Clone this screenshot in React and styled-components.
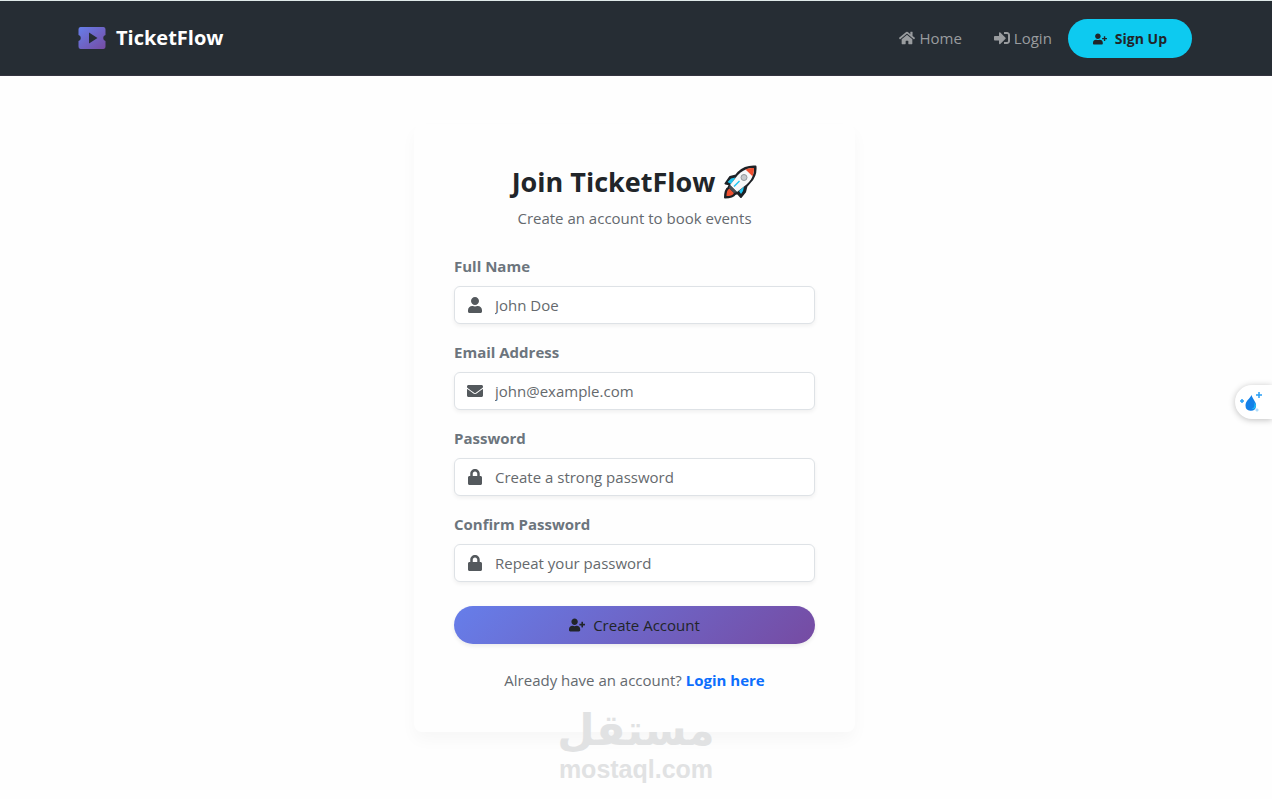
import React from "react";
import styled, { createGlobalStyle } from "styled-components";
import {
  FaHome,
  FaSignInAlt,
  FaUserPlus,
  FaUser,
  FaEnvelope,
  FaLock,
} from "react-icons/fa";

const GlobalStyle = createGlobalStyle`
  *, *::before, *::after { box-sizing: border-box; }
  body {
    margin: 0;
    background: #fefefe;
    color: #212529;
    font-family: "Open Sans", "Noto Sans", sans-serif;
    font-size: 15px;
    line-height: 24px;
  }
  button, input { font: inherit; }
  svg { flex: none; }
`;

const Navbar = styled.header`
  border-top: 1px solid #dfe9e8;
  border-bottom: 1px solid #343440;
  background: #262d34;
  padding-right: 2px;
`;

const NavInner = styled.div`
  display: flex;
  align-items: center;
  justify-content: space-between;
  max-width: 1138px;
  margin: 0 auto;
  padding: 18px 12px 17px;
`;

const Brand = styled.a`
  display: flex;
  align-items: center;
  gap: 10px;
  padding-bottom: 2px;
  color: #fff;
  font-size: 20px;
  font-weight: 700;
  text-decoration: none;
`;

const NavLinks = styled.nav`
  display: flex;
  align-items: center;
  gap: 16px;
`;

const NavLink = styled.a`
  display: flex;
  align-items: center;
  gap: 4px;
  padding: 0 0 2px 16px;
  color: #999c9f;
  text-decoration: none;
`;

const SignUp = styled.button`
  display: flex;
  align-items: center;
  justify-content: center;
  gap: 8px;
  height: 39px;
  padding: 0 25px;
  border: 0;
  border-radius: 20px;
  background: #0dcaf0;
  color: #212529;
  font-size: 14px;
  font-weight: 700;
`;

const Main = styled.main`
  display: flex;
  justify-content: center;
  padding: 48px 3px 48px 0;
`;

const Card = styled.form`
  width: 100%;
  max-width: 441px;
  padding: 40px;
  border-radius: 8px;
  background: #fefefe;
  box-shadow: 0 8px 16px rgba(0, 0, 0, 0.03);
`;

const Title = styled.h1`
  display: flex;
  justify-content: center;
  align-items: center;
  gap: 8px;
  margin: 0;
  padding: 1px 0 7px;
  font-size: 27px;
  font-weight: 700;
  line-height: 34px;
`;

const Subtitle = styled.p`
  margin: 0 0 24px;
  color: #64696e;
  text-align: center;
`;

const Field = styled.div`
  margin-bottom: 16px;
`;

const Label = styled.label`
  display: block;
  margin-bottom: 8px;
  color: #6c757d;
  font-weight: 700;
`;

const InputGroup = styled.div`
  display: flex;
  align-items: center;
  height: 38px;
  border: 1px solid #dee2e6;
  border-radius: 6px;
  background: #fff;
  color: #54595d;
  box-shadow: 0 2px 4px rgba(0, 0, 0, 0.06);
`;

const InputIcon = styled.span`
  display: flex;
  justify-content: center;
  width: 40px;
`;

const Input = styled.input`
  flex: 1;
  min-width: 0;
  height: 100%;
  padding: 0 12px 0 0;
  border: 0;
  outline: 0;
  background: transparent;
  color: #212529;
  &::placeholder { color: #65696d; opacity: 1; }
`;

const Submit = styled.button`
  display: flex;
  align-items: center;
  justify-content: center;
  gap: 8px;
  width: 100%;
  height: 38px;
  margin: 24px 0;
  border: 0;
  border-radius: 19px;
  background: linear-gradient(135deg, #667eea 0%, #764ba2 100%);
  color: #212529;
  box-shadow: 0 2px 4px rgba(0, 0, 0, 0.08);
`;

const Footnote = styled.p`
  margin: 0;
  color: #64696e;
  text-align: center;
`;

const LoginLink = styled.a`
  color: #0d6efd;
  font-weight: 700;
  text-decoration: none;
`;

const SideWidget = styled.button`
  position: fixed;
  top: 385px;
  right: 0;
  display: flex;
  align-items: center;
  width: 37px;
  height: 34px;
  padding: 0 0 0 4px;
  border: 0;
  border-radius: 17px 0 0 17px;
  background: #fff;
  box-shadow: 0 1px 6px rgba(0, 0, 0, 0.25);
`;

const Watermark = styled.div`
  position: absolute;
  top: 704px;
  left: 0;
  right: 0;
  color: #e1e2e3;
  font-weight: 700;
  text-align: center;
  pointer-events: none;
`;

const WatermarkArabic = styled.div`
  font-family: "DejaVu Sans", sans-serif;
  font-size: 43px;
  line-height: 52px;
`;

const WatermarkLatin = styled.div`
  font-family: "Liberation Sans", sans-serif;
  font-size: 25px;
  line-height: 26px;
`;

const TicketLogo = () => (
  <svg width="28" height="22" viewBox="0 0 28 22" aria-hidden="true">
    <defs>
      <linearGradient id="ticket" x1="0" y1="0" x2="1" y2="1">
        <stop offset="0" stopColor="#667eea" />
        <stop offset="1" stopColor="#764ba2" />
      </linearGradient>
    </defs>
    <path
      fill="url(#ticket)"
      fillRule="evenodd"
      d="M2.500 0h23A2.300 2.300 0 0 1 27.500 2.500V8Q25.200 8.500 25.200 11t2.300 3v5.500A2.300 2.300 0 0 1 25.500 22h-23A2.300 2.300 0 0 1 .5 19.500V14Q2.800 13.500 2.800 11T.5 8V2.500A2.300 2.300 0 0 1 2.500 0ZM11 5.500v11l8.500-5.500Z"
    />
  </svg>
);

const Rocket = () => (
  <svg width="34" height="34" viewBox="0 0 34 34" role="img" aria-label="rocket">
    <path d="M32.500 1.500C25 1 20 3 15.500 7.500L13 10.500 7 12 2.500 18.500 7 19.500 5.500 22.500C3 24 2 27 2 32.500c5 0 8.500-1 10-3.500l2.500-1L18 32l4-5 1.500-6L27 17c4.500-4.500 6-9 5.500-15.500Z" fill="#1d2126" stroke="#1d2126" strokeWidth="2" strokeLinejoin="round" />
    <path d="m4.500 17 3.500-3.500 4.500-1L8 19ZM16 26l5-4.500-1 4.500-2 3Z" fill="#1cc4f0" />
    <path d="M14.500 10.500C19 5.500 24 3 31 3c0 7-2.500 12-7.500 16.500L14 27l-7-7Z" fill="#f6f8f9" />
    <path d="M22.500 4.500C25.500 3.300 28 3 31 3c0 3-.5 5.800-1.500 8.300Z" fill="#ef5030" />
    <path d="M6.500 23.500C4 25 3.500 27.500 3.500 31c3.500 0 6.500-.5 7.500-3Z" fill="#ef5030" />
    <path d="m7 20 7 7-3 1-5-5Z" fill="#4a4e53" />
    <path d="m11 21.500 5.500-5.500" stroke="#1cc4f0" strokeWidth="1.500" />
    <circle cx="21" cy="12.500" r="3" fill="#c5c9cc" stroke="#92989d" strokeWidth="1" />
  </svg>
);

const Droplet = () => (
  <svg width="24" height="24" viewBox="0 0 24 24" aria-hidden="true">
    <path d="M12.500 5C10.500 9 6.500 11 6.500 15.500a5.300 5.300 0 0 0 10.500 1c1-4-3-6.500-4.500-11.500Z" fill="#1480e8" />
    <path d="M14.500 12c2 3 1 6-2 7 2.500.5 4.500-1 4.500-4Z" fill="#20c3f5" />
    <path d="M20 2v6M17 5h6" stroke="#289ff5" strokeWidth="1.500" />
    <path d="M3 9v4M1 11h4" stroke="#289ff5" strokeWidth="1.500" />
    <path d="M18 18.500v3M16.500 20h3" stroke="#a6d9fb" strokeWidth="1.500" />
  </svg>
);

const fields = [
  { id: "name", label: "Full Name", type: "text", hint: "John Doe", Icon: FaUser },
  { id: "email", label: "Email Address", type: "email", hint: "john@example.com", Icon: FaEnvelope },
  { id: "password", label: "Password", type: "password", hint: "Create a strong password", Icon: FaLock },
  { id: "confirm", label: "Confirm Password", type: "password", hint: "Repeat your password", Icon: FaLock },
];

export default function App() {
  return (
    <>
      <GlobalStyle />
      <Navbar>
        <NavInner>
          <Brand href="#">
            <TicketLogo />
            TicketFlow
          </Brand>
          <NavLinks>
            <NavLink href="#home">
              <FaHome size={16} />
              Home
            </NavLink>
            <NavLink href="#login">
              <FaSignInAlt size={16} />
              Login
            </NavLink>
            <SignUp type="button">
              <FaUserPlus size={14} />
              Sign Up
            </SignUp>
          </NavLinks>
        </NavInner>
      </Navbar>
      <Main>
        <Card onSubmit={(e) => e.preventDefault()}>
          <Title>
            Join TicketFlow
            <Rocket />
          </Title>
          <Subtitle>Create an account to book events</Subtitle>
          {fields.map(({ id, label, type, hint, Icon }) => (
            <Field key={id}>
              <Label htmlFor={id}>{label}</Label>
              <InputGroup>
                <InputIcon>
                  <Icon size={16} />
                </InputIcon>
                <Input id={id} type={type} placeholder={hint} />
              </InputGroup>
            </Field>
          ))}
          <Submit type="submit">
            <FaUserPlus size={16} />
            Create Account
          </Submit>
          <Footnote>
            Already have an account? <LoginLink href="#login">Login here</LoginLink>
          </Footnote>
        </Card>
      </Main>
      <SideWidget type="button" aria-label="Assistant">
        <Droplet />
      </SideWidget>
      <Watermark>
        <WatermarkArabic lang="ar" dir="rtl">مستقل</WatermarkArabic>
        <WatermarkLatin>mostaql.com</WatermarkLatin>
      </Watermark>
    </>
  );
}
